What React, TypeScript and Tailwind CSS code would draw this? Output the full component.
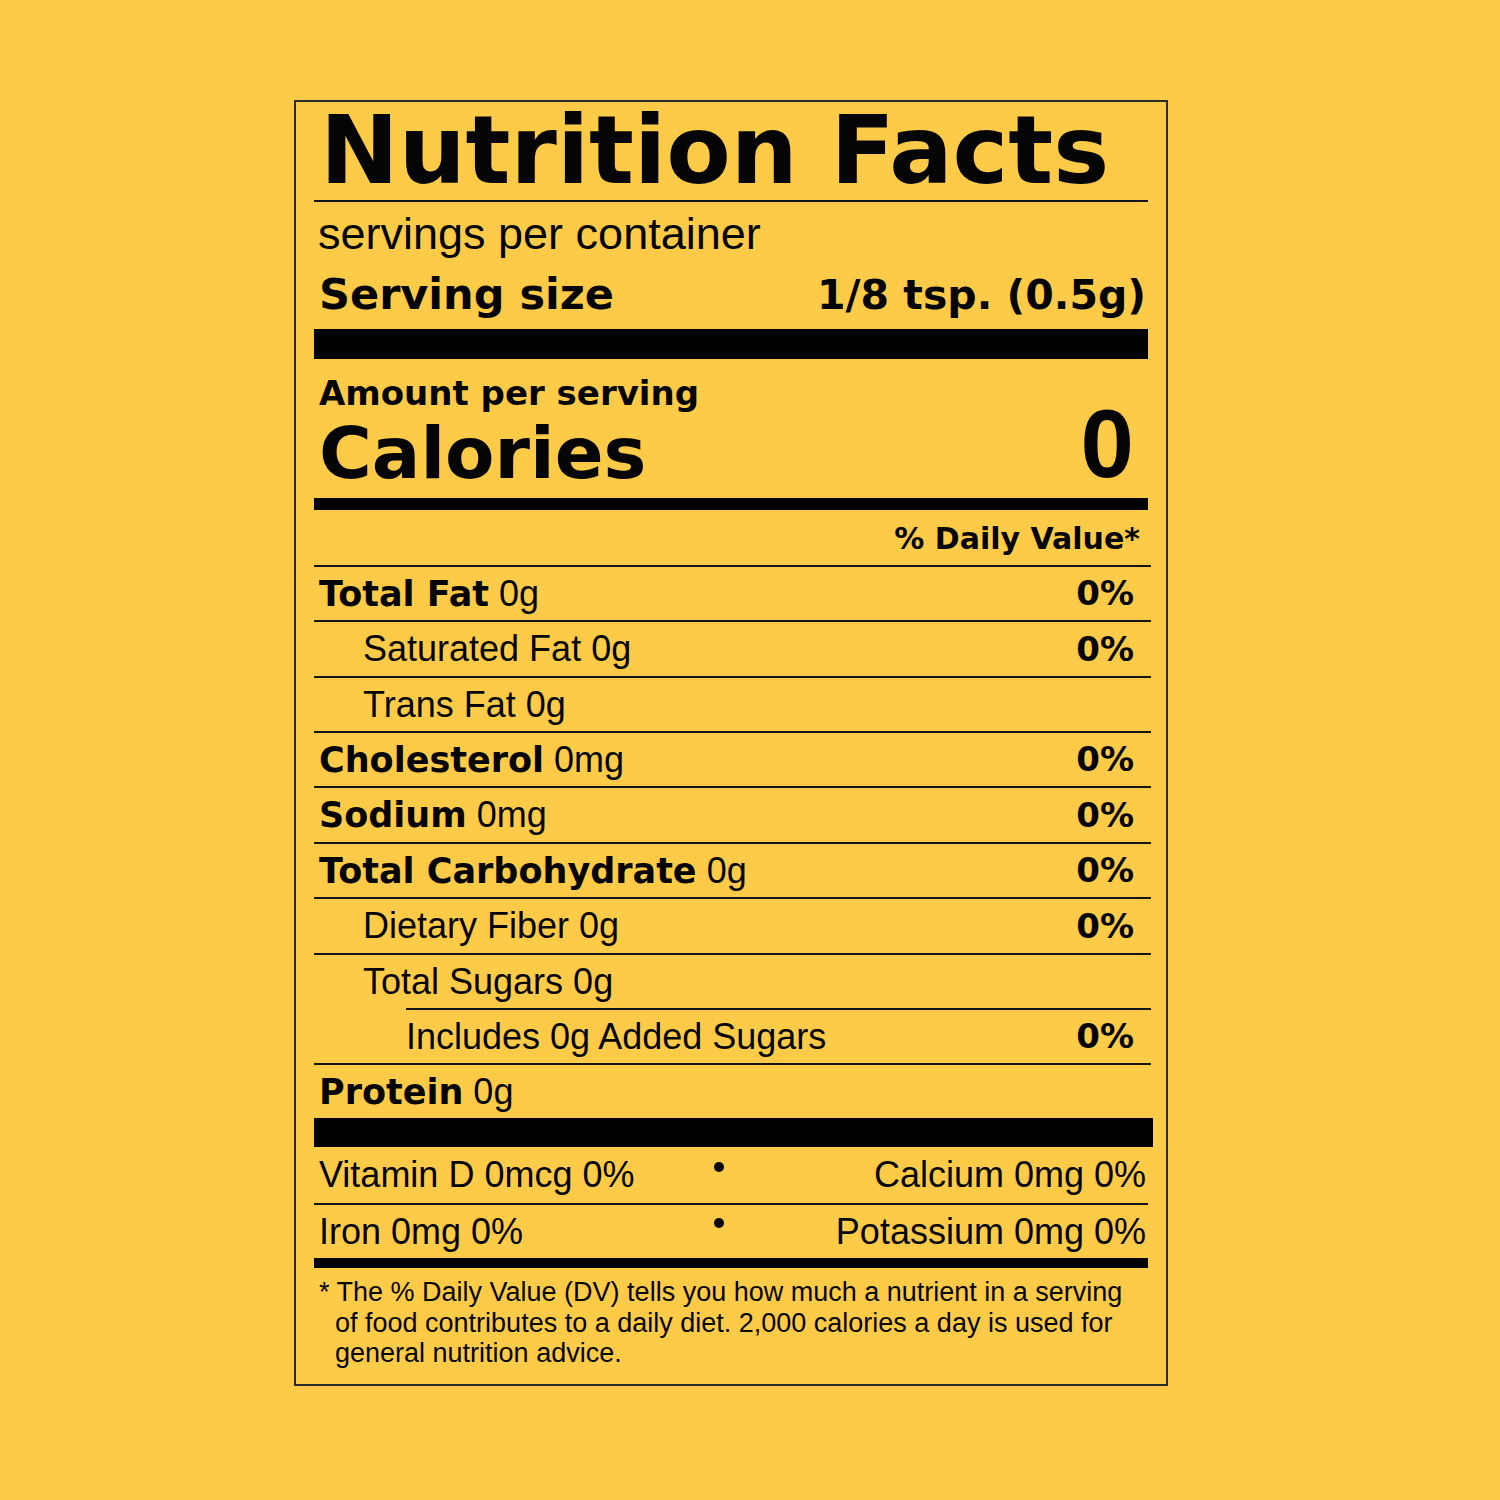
const bold = "font-['DejaVu_Sans',sans-serif] font-bold";
const reg = "font-['Liberation_Sans',Arial,sans-serif] font-normal";

type Row = {
    label: string;
    amount?: string;
    dv?: string;
    bold?: boolean;
    indent?: 0 | 1 | 2;
    tall?: boolean;
};

const rows: Row[] = [
    { label: 'Total Fat', amount: '0g', dv: '0%', bold: true },
    { label: 'Saturated Fat 0g', dv: '0%', indent: 1, tall: true },
    { label: 'Trans Fat 0g', indent: 1 },
    { label: 'Cholesterol', amount: '0mg', dv: '0%', bold: true },
    { label: 'Sodium', amount: '0mg', dv: '0%', bold: true, tall: true },
    { label: 'Total Carbohydrate', amount: '0g', dv: '0%', bold: true },
    { label: 'Dietary Fiber 0g', dv: '0%', indent: 1, tall: true },
    { label: 'Total Sugars 0g', indent: 1 },
    { label: 'Includes 0g Added Sugars', dv: '0%', indent: 2 },
    { label: 'Protein', amount: '0g', bold: true },
];

function NutrientRow({ row }: { row: Row }) {
    const height = row.tall ? 'h-[56px] leading-[54px]' : 'h-[55px] leading-[53px]';
    const pad = row.indent === 1 ? 'pl-[49px]' : row.indent === 2 ? 'ml-[92px] pl-0' : 'pl-[5px]';
    return (
        <div className={`flex justify-between border-t-2 border-[#141414] pr-[17px] -mr-[3px] ${height} ${pad}`}>
            <div className="whitespace-nowrap">
                {row.bold ? (
                    <>
                        <span className={`${bold} text-[35px]`}>{row.label}</span>
                        <span className={`${reg} text-[36px]`}> {row.amount}</span>
                    </>
                ) : (
                    <span className={`${reg} text-[36px]`}>{row.label}</span>
                )}
            </div>
            {row.dv && <span className={`${bold} text-[34px]`}>{row.dv}</span>}
        </div>
    );
}

function MineralRow({ left, right, tall }: { left: string; right: string; tall?: boolean }) {
    return (
        <div className={`grid grid-cols-[395px_12px_1fr] pl-[5px] pr-[2px] ${tall ? 'h-[56px] leading-[56px]' : 'h-[53px] leading-[53px]'}`}>
            <span className={`${reg} text-[36px] whitespace-nowrap`}>{left}</span>
            <div className={`w-[10px] h-[10px] rounded-full bg-black ${tall ? 'mt-[15px]' : 'mt-[13px]'}`} />
            <span className={`${reg} text-[36px] text-right whitespace-nowrap`}>{right}</span>
        </div>
    );
}

export default function App() {
    return (
        <div className="min-h-[1500px] w-[1500px] bg-[#fdcb47] pt-[100px] pl-[294px] text-[#050505]">
            <div className="w-[874px] h-[1286px] border-2 border-[#2b2b2b] px-[18px] pt-0 flex flex-col">
                {/* Header */}
                <div className={`${bold} text-[94px] h-[98px] leading-[98px] pl-[6px] whitespace-nowrap`}>
                    Nutrition Facts
                </div>
                <div className="h-[2px] bg-[#141414]" />
                <div className={`${reg} text-[45px] h-[64px] leading-[64px] pl-[4px]`}>servings per container</div>
                <div className={`${bold} h-[56px] leading-[56px] flex justify-between items-baseline pl-[5px] pr-[2px]`}>
                    <span className="text-[43px]">Serving size</span>
                    <span className="text-[41px]">1/8 tsp. (0.5g)</span>
                </div>
                <div className="h-[30px] bg-black mt-[7px]" />

                {/* Calories */}
                <div className={`${bold} text-[34px] h-[68px] leading-[68px] pl-[5px]`}>Amount per serving</div>
                <div className="flex justify-between items-start h-[52px] pl-[5px] pr-[14px]">
                    <span className={`${bold} text-[72px] leading-[52px]`}>Calories</span>
                    <span className="font-['Liberation_Sans',Arial,sans-serif] font-bold text-[96px] leading-[34px]">0</span>
                </div>
                <div className="h-[12px] bg-black mt-[19px]" />

                <div className={`${bold} text-[30px] h-[55px] leading-[57px] text-right pr-[8px]`}>% Daily Value*</div>

                {/* Nutrients */}
                {rows.map((row) => (
                    <NutrientRow key={row.label} row={row} />
                ))}
                <div className="h-[29px] bg-black -mr-[5px]" />

                {/* Vitamins & minerals */}
                <MineralRow left="Vitamin D 0mcg 0%" right="Calcium 0mg 0%" tall />
                <div className="h-[2px] bg-[#141414]" />
                <MineralRow left="Iron 0mg 0%" right="Potassium 0mg 0%" />
                <div className="h-[10px] bg-black" />

                <p className={`${reg} text-[27px] leading-[30.5px] mt-[9px] pl-[21px] -indent-[16px] pr-[18px]`}>
                    * The % Daily Value (DV) tells you how much a nutrient in a serving of food contributes to a daily diet. 2,000 calories a day is used for general nutrition advice.
                </p>
            </div>
        </div>
    );
}
